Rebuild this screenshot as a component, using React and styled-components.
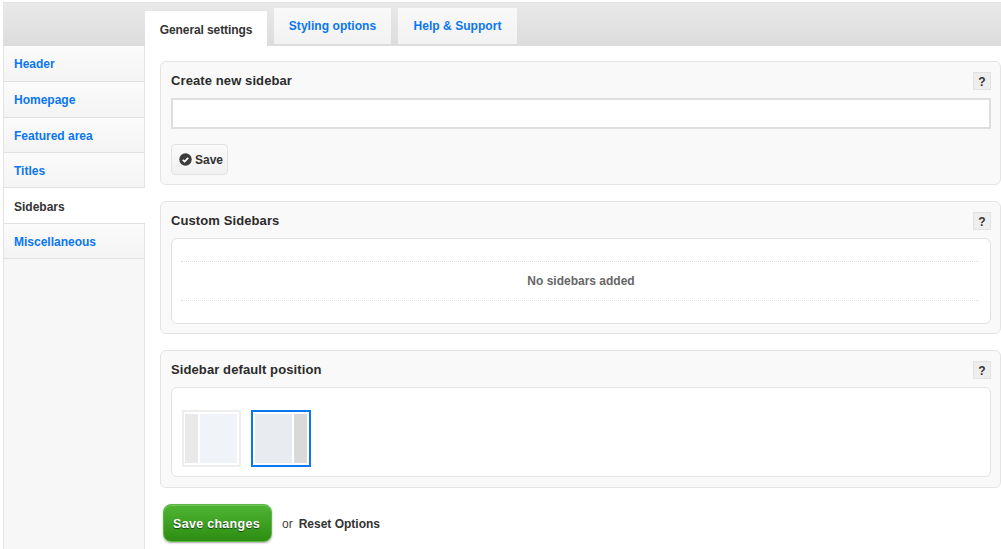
import React from "react";
import styled, { createGlobalStyle } from "styled-components";

const Global = createGlobalStyle`
  html, body { margin: 0; padding: 0; background: #fff; }
  body { font-family: "Liberation Sans", Arial, sans-serif; font-size: 12px; color: #333; overflow: hidden; }
  * { box-sizing: border-box; }
`;
const Page = styled.div`
  width: 1001px; height: 549px; padding: 2px 0 0 3px; display: flex; flex-direction: column;
`;
const TopBar = styled.div`
  height: 44px; flex: none; display: flex; align-items: flex-end; padding-left: 142px; gap: 7px;
  background: linear-gradient(#e9e9e9, #dcdcdc); border-top: 1px solid #e0e0e0;
`;
const Tab = styled.a`
  display: flex; align-items: center; justify-content: center; flex: none;
  width: ${p => p.$w}px;
  height: ${p => (p.$active ? 35 : 36)}px;
  margin-bottom: ${p => (p.$active ? 0 : 2)}px;
  background: ${p => (p.$active ? "#fff" : "linear-gradient(#f9f9f9,#f2f2f2)")};
  color: ${p => (p.$active ? "#333" : "#0a76f0")};
  font-weight: bold; font-size: 12px; letter-spacing: ${p => (p.$active ? "-.1px" : ".05px")};
  padding-top: ${p => (p.$active ? 2 : 0)}px;
`;
const Body = styled.div`
  flex: 1; display: flex; min-height: 0;
`;
const Side = styled.nav`
  width: 142px; flex: none; background: #f7f7f7; border-left: 1px solid #e4e4e4; border-right: 1px solid #e4e4e4;
  display: flex; flex-direction: column;
`;
const SideItem = styled.a`
  height: ${p => p.$h}px; flex: none; display: flex; align-items: center; padding: ${p => (p.$active ? 2 : 1)}px 0 0 10px;
  font-weight: bold; font-size: 12px;
  color: ${p => (p.$active ? "#333" : "#0a76f0")};
  background: ${p => (p.$active ? "#fff" : "linear-gradient(#fbfbfb,#f4f4f4)")};
  border-bottom: 1px solid #e0e0e0;
  margin-right: ${p => (p.$active ? -1 : 0)}px;
`;
const Main = styled.main`
  flex: 1; min-width: 0; padding: 15px 0 0 15px; display: flex; flex-direction: column;
`;
const Section = styled.section`
  height: ${p => p.$h}px; flex: none; position: relative; margin-bottom: 16px;
  background: #f9f9f9; border: 1px solid #e4e4e4; border-radius: 6px; padding: 11px 10px 0;
`;
const Title = styled.h3`
  margin: 0; font-size: 13px; line-height: 15px; font-weight: bold; color: #2b2b2b; letter-spacing: .1px;
`;
const Help = styled.span`
  position: absolute; top: 10px; right: 9px; width: 18px; height: 18px; padding-top: 1px;
  display: flex; align-items: center; justify-content: center;
  background: #eee; border: 1px solid #e2e2e2; font-weight: bold; font-size: 12px; color: #333;
`;
const Input = styled.input`
  display: block; width: 820px; height: 31px; margin-top: 10px; background: #fff;
  border: 2px solid #dedede; outline: none;
`;
const SaveBtn = styled.button`
  display: flex; align-items: center; gap: 3px; width: 57px; height: 31px; margin-top: 15px; padding: 0 0 0 7px;
  background: linear-gradient(#fafafa,#f1f1f1); border: 1px solid #e2e2e2; border-radius: 4px;
  font-family: inherit; font-weight: bold; font-size: 12px; color: #333;
`;
const Inner = styled.div`
  width: 820px; height: ${p => p.$h}px; margin-top: 10px; background: #fff; border: 1px solid #e2e2e2; border-radius: 6px;
`;
const EmptyBox = styled(Inner)`
  padding: 22px 11px 0 9px;
`;
const EmptyRow = styled.div`
  height: 40px; display: flex; align-items: center; justify-content: center;
  border-top: 1px dotted #ddd; border-bottom: 1px dotted #ddd;
  color: #666; font-weight: bold; font-size: 12px; padding-left: 2px;
`;
const Thumbs = styled(Inner)`
  display: flex; gap: 10px; padding: 22px 10px 0;
`;
const Thumb = styled.div`
  width: ${p => (p.$sel ? 60 : 59)}px; height: 57px; display: flex; gap: 2px;
  padding: ${p => (p.$sel ? "2px" : "2px 2px 2px 1px")};
  border: 2px solid ${p => (p.$sel ? "#0a76f0" : "#eeeeee")}; background: #fff;
  flex-direction: ${p => (p.$sel ? "row-reverse" : "row")};
`;
const ThumbSide = styled.div`
  width: 13px; flex: none; background: ${p => (p.$sel ? "#d9d9d9" : "#e9e9e9")};
`;
const ThumbMain = styled.div`
  flex: 1; background: ${p => (p.$sel ? "#e8ecf0" : "#f0f4f8")};
`;
const Footer = styled.div`
  display: flex; align-items: center; margin: 0 0 0 3px;
`;
const Submit = styled.button`
  width: 109px; height: 38px; border: 1px solid #5cb846; border-radius: 8px; flex: none;
  background: linear-gradient(#4fb533,#2d8d12);
  box-shadow: 0 1px 2px rgba(0,0,0,.35), inset 0 1px 0 rgba(255,255,255,.2);
  color: #fff; font-family: inherit; font-weight: bold; font-size: 12.5px; letter-spacing: .3px;
  text-shadow: 0 1px 1px rgba(0,0,0,.6); padding: 1px 2px 0 0;
`;
const Or = styled.span`
  margin-left: 10px; color: #444; font-size: 12px; padding-top: 1px;
`;
const Reset = styled.a`
  margin-left: 6px; color: #333; font-weight: bold; font-size: 12px; padding-top: 1px;
`;

const Check = () => (
  <svg width="13" height="13" viewBox="0 0 13 13">
    <circle cx="6.5" cy="6.5" r="6.2" fill="#3c3c3c" />
    <path d="M3.8 6.8 L5.6 8.6 L9.2 4.8" fill="none" stroke="#fff" strokeWidth="1.7" />
  </svg>
);

const items = [
  ["Header", 36], ["Homepage", 36], ["Featured area", 35], ["Titles", 35], ["Sidebars", 36, true], ["Miscellaneous", 35],
];

export default function App() {
  return (
    <Page>
      <Global />
      <TopBar>
        <Tab $active $w={122}>General settings</Tab>
        <Tab $w={117}>Styling options</Tab>
        <Tab $w={119}>Help &amp; Support</Tab>
      </TopBar>
      <Body>
        <Side>
          {items.map(([t, h, a]) => (
            <SideItem key={t} $h={h} $active={a}>{t}</SideItem>
          ))}
        </Side>
        <Main>
          <Section $h={124}>
            <Title>Create new sidebar</Title>
            <Help>?</Help>
            <Input />
            <SaveBtn><Check />Save</SaveBtn>
          </Section>
          <Section $h={133}>
            <Title>Custom Sidebars</Title>
            <Help>?</Help>
            <EmptyBox $h={86}>
              <EmptyRow>No sidebars added</EmptyRow>
            </EmptyBox>
          </Section>
          <Section $h={138}>
            <Title>Sidebar default position</Title>
            <Help>?</Help>
            <Thumbs $h={90}>
              <Thumb><ThumbSide /><ThumbMain /></Thumb>
              <Thumb $sel><ThumbSide $sel /><ThumbMain $sel /></Thumb>
            </Thumbs>
          </Section>
          <Footer>
            <Submit>Save changes</Submit>
            <Or>or</Or>
            <Reset>Reset Options</Reset>
          </Footer>
        </Main>
      </Body>
    </Page>
  );
}
